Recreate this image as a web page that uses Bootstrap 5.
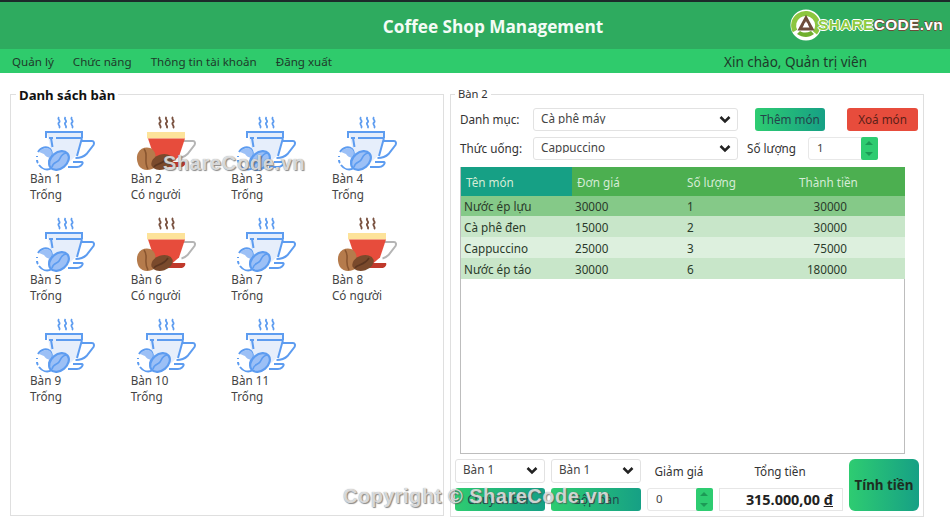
<!DOCTYPE html>
<html lang="vi">
<head>
<meta charset="utf-8">
<title>Coffee Shop Management</title>
<link href="https://cdn.jsdelivr.net/npm/bootstrap@5.3.0/dist/css/bootstrap.min.css" rel="stylesheet">
<style>
html,body{height:522px;overflow:hidden;background:#fff}
body{font-family:"Noto Sans","Open Sans",sans-serif;font-size:11.7px;color:#333;position:relative}
.topline{height:2px;background:#1c2a2a}
.head-bar{height:47px;background:#2eab5f;padding-left:36px;padding-top:3px}
.head-title{font-size:17.2px;font-weight:700;font-family:"Open Sans",sans-serif;color:#f4fbf6}
.logo-box{position:absolute;left:789px;top:9px;display:flex;align-items:center}
.logo-txt{font:700 15.5px "Liberation Sans",sans-serif;letter-spacing:.3px;margin-left:-5px;color:#8fcb3f;text-shadow:1px 0 0 #fff,-1px 0 0 #fff,0 1px 0 #fff,0 -1px 0 #fff}
.logo-txt i{font-style:normal;font-weight:700;color:#fff;text-shadow:.7px 0 0 #6d4c3a,-.7px 0 0 #6d4c3a,0 .7px 0 #6d4c3a,0 -.7px 0 #6d4c3a}
.menu-bar{height:24px;background:#2fcb6c;color:#1e3a2a;padding:2px 83px 0 12px;gap:19px}
.menu-bar span{font-size:11.6px}
.menu-bar .hello{font-size:13.5px}
.main-wrap{height:449px;padding-left:10px}
.fs-left{width:434px;height:422px;margin-top:21px;border:1px solid #dfdfdf;position:relative}
.fs-right{width:474px;height:423px;margin:21px 0 0 6px;border:1px solid #dfdfdf;position:relative;padding-top:13px}
.legend-l{position:absolute;left:5px;top:-8px;background:#fff;padding:0 3px;font-weight:700;font-size:13.2px;line-height:17px;color:#111}
.legend-r{position:absolute;left:4px;top:-8px;background:#fff;padding:0 3px;font-size:11.2px;line-height:14px}
.tbl-grid{display:grid;grid-template-columns:repeat(4,100.67px);grid-auto-rows:101px;padding:19px 0 0 18px}
.cell{line-height:16.3px;color:#444;padding-left:1px}
.cell svg{display:block;width:70px;height:58px;margin:0 0 -2px -1px}
.form-rw{display:flex;align-items:center;height:23px}
.form-rw+.form-rw{margin-top:6px}
.lab-w{width:82px;padding:1px 0 0 9px;flex:none}
.form-select.pick{width:205px;height:23px;min-height:0;flex:none;font-size:11.7px;color:#444;padding:0 24px 2px 7px;border:1px solid #e2e2e2;border-radius:3px;box-shadow:none;line-height:1;background-size:12px 10px;background-position:right 6px center;background-image:url("data:image/svg+xml,%3csvg xmlns='http://www.w3.org/2000/svg' viewBox='0 0 16 12'%3e%3cpath fill='none' stroke='%23222' stroke-width='3.4' d='M2 2l6 6 6-6'/%3e%3c/svg%3e")}
.form-select.pick.sm-pick{width:90px;height:24px}
.btn.act-g,.btn.act-r{border:0;border-radius:3px;padding:0;font-size:11.7px;height:23px;color:#24444a}
.btn.act-g{background:linear-gradient(90deg,#2ecc71,#16a085)}
.btn.act-r{background:#e74c3c;color:#5c1f18}
.w-add{width:70px;margin-left:17px}
.w-del{width:71px;margin-left:22px}
.lab-qty{margin-left:9px;width:61px;padding-top:1px}
.spin-box{position:relative;background:#fff;border:1px solid #e8e8e8;border-radius:3px;height:23px;font-size:11.4px;display:flex;align-items:center;padding:0 0 2px 8px;color:#444}
.qty-w{width:70px}
.spin-box b{position:absolute;right:-1px;top:-1px;bottom:-1px;width:17px;background:#2ecc71;border-radius:2px}
.spin-box b:before,.spin-box b:after{content:"";position:absolute;left:4px;border-left:4.5px solid transparent;border-right:4.5px solid transparent}
.spin-box b:before{top:4px;border-bottom:4px solid #1c9a56}
.spin-box b:after{bottom:4px;border-top:4px solid #1c9a56}
.tbl-box{margin:7px 0 0 9px;width:445px;height:287px;border:1px solid #bdbdbd;border-top:0;background:#fff}
.dish-tbl{table-layout:fixed;width:444px;margin:0;font-size:11.7px;border-collapse:collapse}
.c-a{width:111px}.c-b{width:112px}.c-c{width:110px}
.dish-tbl>:not(caption)>*>*{height:21px;padding:2px 0 0 3px;border:0;box-shadow:none;color:#2a3a2a;vertical-align:middle;line-height:1;background:#c8e6c9;font-weight:400}
.dish-tbl>thead>tr>th{height:29px;background:#4caf50;color:#d5ecd6;padding:3px 0 0 5px}
.dish-tbl>thead>tr>th:first-child{background:#16a085}
.dish-tbl>thead>tr>th:nth-child(n+3){padding-left:4px}
.dish-tbl>tbody>tr>td:nth-child(3){padding-left:4px}
.dish-tbl>tbody>tr>td:nth-child(4){text-align:right;padding-right:58px}
.dish-tbl>tbody>tr.row-sel>td{background:#85c988;height:20px}
.dish-tbl>tbody>tr.row-alt>td{background:#ddf0de}
.bottom-rw{display:flex;gap:6px;height:52px;margin:5px 0 0 4px}
.bottom-col{display:flex;flex-direction:column;justify-content:space-between;flex:none;align-items:stretch}
.col-a{width:90px}.col-b{width:66px}.col-c{width:124px}
.cap-t{height:24px;display:flex;align-items:center;justify-content:center;padding:2px 2px 0 0}
.total-v{height:23px;background:#fff;border:1px solid #e6e6e6;font-weight:700;font-size:14.4px;color:#222;display:flex;align-items:center;justify-content:flex-end;padding-right:9px;font-family:"Open Sans",sans-serif;white-space:pre}
.btn.act-g.pay{width:70px;height:52px;border-radius:6px;font-weight:700;font-size:13.4px;color:#1e2e22}
.bt-w{width:90px}
.wm{position:absolute;font-family:"Liberation Sans",sans-serif;font-size:20px;font-weight:700;letter-spacing:.5px;color:rgba(238,238,238,.82);text-shadow:1px 1px 1px rgba(80,80,80,.65),0 0 1px rgba(80,80,80,.6);white-space:nowrap}
.wm-a{left:163px;top:148px;letter-spacing:.65px}
.wm-b{left:343px;top:481px}
</style>
</head>
<body>
<div class="topline"></div>
<div class="head-bar d-flex align-items-center justify-content-center"><div class="head-title">Coffee Shop Management</div></div>
<div class="menu-bar d-flex align-items-center">
  <span>Quản lý</span><span>Chức năng</span><span>Thông tin tài khoản</span><span>Đăng xuất</span>
  <span class="hello ms-auto">Xin chào, Quản trị viên</span>
</div>
<div class="logo-box">
  <svg width="34" height="32" viewBox="0 0 34 32"><circle cx="17" cy="16" r="15.5" fill="#fff"/><path d="M6 22A12 12 0 1 1 26 24" fill="none" stroke="#8cc63f" stroke-width="5"/><path d="M8 25c6 4 12 4 17 0l-3-3c-4 2-8 2-11 0z" fill="#6fae2e"/><path d="M17 9l6 11H11z" fill="none" stroke="#6d4c3a" stroke-width="3"/><circle cx="17" cy="16" r="2" fill="#fff"/></svg>
  <div class="logo-txt">SHARE<i>CODE.vn</i></div>
</div>

<svg width="0" height="0" class="position-absolute">
  <defs>
    <symbol id="cup-free" viewBox="0 0 70 58">
      <path d="M30 3c-2.500 2.500 2.500 3.500 0 5.500s2.500 3.500 0 5.500M36.500 3c-2.500 2.500 2.500 3.500 0 5.500s2.500 3.500 0 5.500M43 3c-2.500 2.500 2.500 3.500 0 5.500s2.500 3.500 0 5.500" fill="none" stroke="#5d9cf0" stroke-width="1.700"/>
      <path d="M18 18h35v6l-5 17-8 7H24z" fill="#e6eefb"/>
      <path d="M17 24v-6h36v6M20 24h4M27 24h26M53 24l-5 18M22 24l1.500 9M53 27h10c2 0 2.500 2 1.500 4l-7 9c-3 3-7 4-11 4M44 48h9c1 0 1 2-1 3.500-1 1-2 1.500-4 1.500h-9" fill="none" stroke="#5d9cf0" stroke-width="2"/>
      <path d="M9 38c3-5 9-6 12-3 3 3 2 6 0 9-2 4 0 7 2 10-5 3-10 1-13-3" fill="#fff" stroke="#5d9cf0" stroke-width="2"/>
      <path d="M10 38c3-4 8-5 11-3 3 3 2 6 0 9-3-1-5-2-6-4-2-1-3-1-5-2z" fill="#9cc0f6"/>
      <path d="M8 42v1M8 46c0 1 0 2 1 3" fill="none" stroke="#5d9cf0" stroke-width="2"/>
      <ellipse cx="30" cy="46.500" rx="11" ry="8" fill="#9cc0f6" stroke="#5d9cf0" stroke-width="2.200" transform="rotate(-40 30 46.500)"/>
      <path d="M23 53c1-5 5-4 7-7s2-6 7-7" fill="none" stroke="#5d9cf0" stroke-width="1.600"/>
    </symbol>
    <symbol id="cup-busy" viewBox="0 0 70 58">
      <path d="M30 3c-2.500 2.500 2.500 3.500 0 5.500s2.500 3.500 0 5.500M36.500 3c-2.500 2.500 2.500 3.500 0 5.500s2.500 3.500 0 5.500M43 3c-2.500 2.500 2.500 3.500 0 5.500s2.500 3.500 0 5.500" fill="none" stroke="#7a5240" stroke-width="1.800"/>
      <path d="M53 27h10c2 0 2.500 2 1.500 4l-7 9c-2 2-4 3-6 3.500" fill="none" stroke="#b5b5b5" stroke-width="2"/>
      <rect x="17" y="18" width="38" height="6.500" fill="#fde39a"/>
      <path d="M18 24.500h37l-6 18-7 6H26z" fill="#e74c3c"/>
      <path d="M38 48h17c1 1 0 4-3 5H38z" fill="#c0392b"/>
      <path d="M8 39c3-6 11-7 15-3 3 3 3 8 3 12 0 3-1 6-4 7-5 2-10 1-13-3-2-4-3-9-1-13z" fill="#b57b4c"/>
      <ellipse cx="32" cy="48" rx="11" ry="7.500" fill="#7a4a2c" transform="rotate(-18 32 48)"/>
      <path d="M14 35c5 6-1 12 4 20" fill="none" stroke="#8a5630" stroke-width="1.600"/>
      <path d="M24 53c2-4 9-2 14-10" fill="none" stroke="#5c3620" stroke-width="1.600"/>
    </symbol>
  </defs>
</svg>

<div class="main-wrap d-flex">
  <div class="fs-left">
    <div class="legend-l">Danh sách bàn</div>
    <div class="tbl-grid">
      <div class="cell"><svg><use href="#cup-free"/></svg>Bàn 1<br>Trống</div>
      <div class="cell"><svg><use href="#cup-busy"/></svg>Bàn 2<br>Có người</div>
      <div class="cell"><svg><use href="#cup-free"/></svg>Bàn 3<br>Trống</div>
      <div class="cell"><svg><use href="#cup-free"/></svg>Bàn 4<br>Trống</div>
      <div class="cell"><svg><use href="#cup-free"/></svg>Bàn 5<br>Trống</div>
      <div class="cell"><svg><use href="#cup-busy"/></svg>Bàn 6<br>Có người</div>
      <div class="cell"><svg><use href="#cup-free"/></svg>Bàn 7<br>Trống</div>
      <div class="cell"><svg><use href="#cup-busy"/></svg>Bàn 8<br>Có người</div>
      <div class="cell"><svg><use href="#cup-free"/></svg>Bàn 9<br>Trống</div>
      <div class="cell"><svg><use href="#cup-free"/></svg>Bàn 10<br>Trống</div>
      <div class="cell"><svg><use href="#cup-free"/></svg>Bàn 11<br>Trống</div>
    </div>
  </div>
  <div class="fs-right">
    <div class="legend-r">Bàn 2</div>
    <div class="form-rw">
      <div class="lab-w">Danh mục:</div>
      <select class="form-select pick"><option>Cà phê máy</option></select>
      <button class="btn act-g w-add">Thêm món</button>
      <button class="btn act-r w-del">Xoá món</button>
    </div>
    <div class="form-rw">
      <div class="lab-w">Thức uống:</div>
      <select class="form-select pick"><option>Cappuccino</option></select>
      <div class="lab-qty">Số lượng</div>
      <div class="spin-box qty-w">1<b></b></div>
    </div>
    <div class="tbl-box">
      <table class="table dish-tbl">
        <colgroup><col class="c-a"><col class="c-a"><col class="c-b"><col class="c-c"></colgroup>
        <thead><tr><th>Tên món</th><th>Đơn giá</th><th>Số lượng</th><th>Thành tiền</th></tr></thead>
        <tbody>
          <tr class="row-sel"><td>Nước ép lựu</td><td>30000</td><td>1</td><td>30000</td></tr>
          <tr><td>Cà phê đen</td><td>15000</td><td>2</td><td>30000</td></tr>
          <tr class="row-alt"><td>Cappuccino</td><td>25000</td><td>3</td><td>75000</td></tr>
          <tr><td>Nước ép táo</td><td>30000</td><td>6</td><td>180000</td></tr>
        </tbody>
      </table>
    </div>
    <div class="bottom-rw">
      <div class="bottom-col col-a">
        <select class="form-select pick sm-pick"><option>Bàn 1</option></select>
        <button class="btn act-g bt-w">Chuyển bàn</button>
      </div>
      <div class="bottom-col col-a">
        <select class="form-select pick sm-pick"><option>Bàn 1</option></select>
        <button class="btn act-g bt-w">Gộp bàn</button>
      </div>
      <div class="bottom-col col-b">
        <div class="cap-t">Giảm giá</div>
        <div class="spin-box">0<b></b></div>
      </div>
      <div class="bottom-col col-c">
        <div class="cap-t">Tổng tiền</div>
        <div class="total-v">315.000,00 <u>đ</u></div>
      </div>
      <button class="btn act-g pay">Tính tiền</button>
    </div>
  </div>
</div>
<div class="wm wm-a">ShareCode.vn</div>
<div class="wm wm-b">Copyright © ShareCode.vn</div>
<script src="https://cdn.jsdelivr.net/npm/bootstrap@5.3.0/dist/js/bootstrap.bundle.min.js"></script>
</body>
</html>
